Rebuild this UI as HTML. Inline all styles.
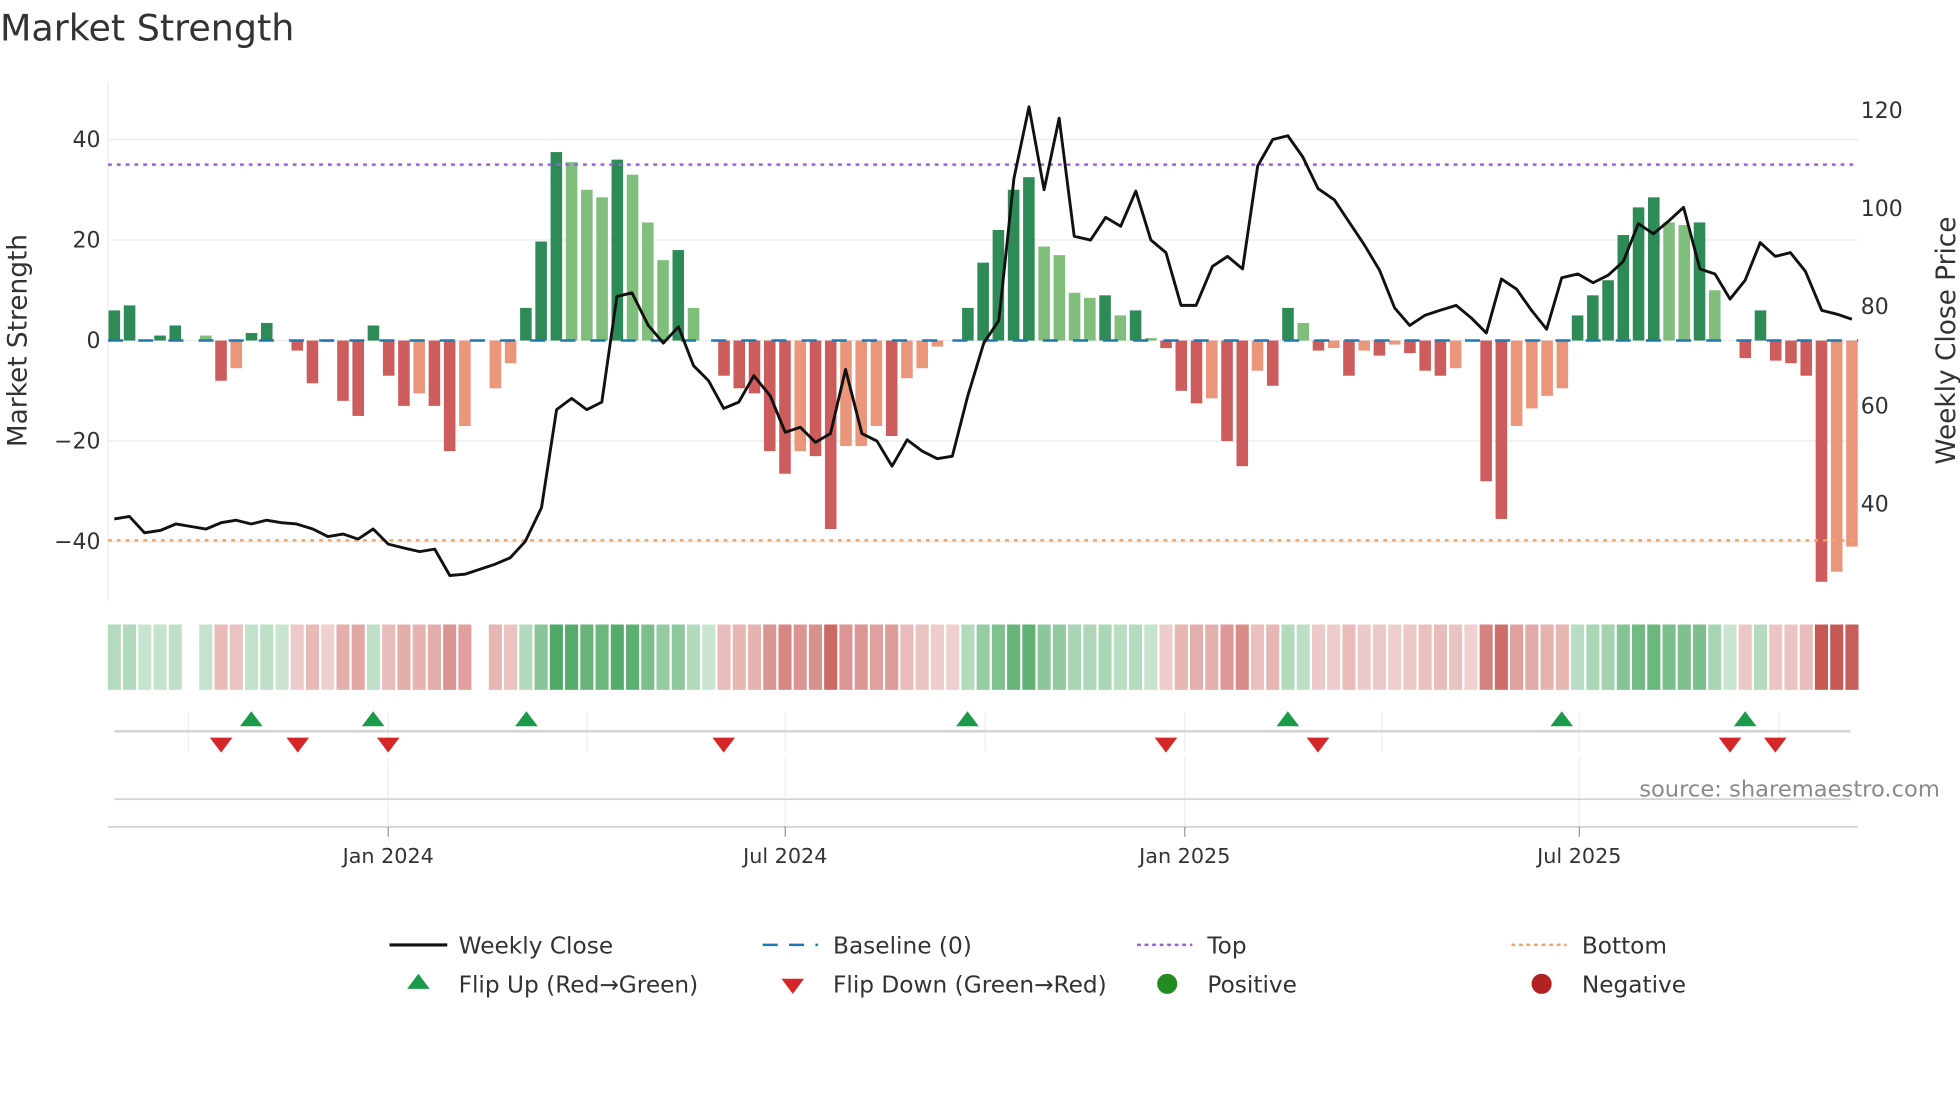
<!DOCTYPE html>
<html><head><meta charset="utf-8">
<style>
html,body{margin:0;padding:0;background:#fff;width:1960px;height:1102px;overflow:hidden}
svg{display:block}
text{font-family:"DejaVu Sans","Liberation Sans",sans-serif;fill:#333}
</style></head>
<body>
<svg id="s" width="1960" height="1102" viewBox="0 0 1560 877" xmlns="http://www.w3.org/2000/svg">
<text x="0" y="32" font-size="29" fill="#333">Market Strength</text>
<g stroke="#eee" stroke-width="1.2">
<line x1="86" y1="111" x2="1479" y2="111"/><line x1="86" y1="191" x2="1479" y2="191"/>
<line x1="86" y1="271" x2="1479" y2="271"/><line x1="86" y1="351" x2="1479" y2="351"/>
<line x1="86" y1="431" x2="1479" y2="431"/>
</g>
<line x1="86" y1="65" x2="86" y2="478" stroke="#eee" stroke-width="1.2"/>
<g font-size="17.5" text-anchor="end">
<text x="80" y="117">40</text><text x="80" y="197">20</text><text x="80" y="277">0</text>
<text x="80" y="357">−20</text><text x="80" y="437">−40</text>
</g>
<g font-size="17.5">
<text x="1481" y="94">120</text><text x="1481" y="172">100</text><text x="1481" y="250">80</text>
<text x="1481" y="329">60</text><text x="1481" y="407">40</text>
</g>
<text transform="translate(21,271) rotate(-90)" font-size="21" text-anchor="middle">Market Strength</text>
<text transform="translate(1556,271) rotate(-90)" font-size="21" text-anchor="middle">Weekly Close Price</text>
<g id="bars"></g>
<line x1="86" y1="271" x2="1479" y2="271" stroke="#1f77b4" stroke-width="2" stroke-dasharray="12,12"/>
<line x1="86" y1="131" x2="1479" y2="131" stroke="#9b5de5" stroke-width="2" stroke-dasharray="3,4"/>
<line x1="86" y1="430" x2="1479" y2="430" stroke="#f4a261" stroke-width="2" stroke-dasharray="3,4"/>
<polyline id="price" fill="none" stroke="#111" stroke-width="2.3" stroke-linejoin="round"/>
<g id="strip"></g>
<g stroke="#eee" stroke-width="1">
<line x1="150" y1="567" x2="150" y2="598"/><line x1="309" y1="567" x2="309" y2="598"/>
<line x1="467" y1="567" x2="467" y2="598"/><line x1="625" y1="567" x2="625" y2="598"/>
<line x1="784" y1="567" x2="784" y2="598"/><line x1="943" y1="567" x2="943" y2="598"/>
<line x1="1100" y1="567" x2="1100" y2="598"/><line x1="1257" y1="567" x2="1257" y2="598"/>
<line x1="1416" y1="567" x2="1416" y2="598"/>
<line x1="309" y1="603" x2="309" y2="658"/><line x1="625" y1="603" x2="625" y2="658"/>
<line x1="943" y1="603" x2="943" y2="658"/><line x1="1257" y1="603" x2="1257" y2="658"/>
</g>
<line x1="91" y1="582" x2="1473" y2="582" stroke="#d4d4d4" stroke-width="2"/>
<g id="marks"></g>
<line x1="91" y1="636" x2="1473" y2="636" stroke="#d4d4d4" stroke-width="1.5"/>
<line x1="86" y1="658" x2="1479" y2="658" stroke="#d4d4d4" stroke-width="1.5"/>
<g stroke="#999" stroke-width="1"><line x1="309" y1="658" x2="309" y2="666"/><line x1="625" y1="658" x2="625" y2="666"/><line x1="943" y1="658" x2="943" y2="666"/><line x1="1257" y1="658" x2="1257" y2="666"/></g>
<g font-size="16.5" text-anchor="middle">
<text x="309" y="687">Jan 2024</text><text x="625" y="687">Jul 2024</text>
<text x="943" y="687">Jan 2025</text><text x="1257" y="687">Jul 2025</text>
</g>
<text x="1544" y="634" font-size="18" text-anchor="end" style="fill:#8a8a8a">source: sharemaestro.com</text>
<g font-size="18.5">
<line x1="310" y1="752" x2="356" y2="752" stroke="#111" stroke-width="2.5"/>
<text x="365" y="759">Weekly Close</text>
<line x1="607" y1="752" x2="651" y2="752" stroke="#1f77b4" stroke-width="2" stroke-dasharray="12,9"/>
<text x="663" y="759">Baseline (0)</text>
<line x1="905" y1="752" x2="949" y2="752" stroke="#9b5de5" stroke-width="2" stroke-dasharray="3,3"/>
<text x="961" y="759">Top</text>
<line x1="1203" y1="752" x2="1247" y2="752" stroke="#f4a261" stroke-width="2" stroke-dasharray="3,3"/>
<text x="1259" y="759">Bottom</text>
<polygon points="333,775 324,787 342,787" fill="#1a9a4a"/>
<text x="365" y="790">Flip Up (Red→Green)</text>
<polygon points="622,779 640,779 631,791" fill="#d62728"/>
<text x="663" y="790">Flip Down (Green→Red)</text>
<circle cx="929" cy="783" r="8" fill="#228b22"/>
<text x="961" y="790">Positive</text>
<circle cx="1227" cy="783" r="8" fill="#b22222"/>
<text x="1259" y="790">Negative</text>
</g>
</svg>
<script>
var V="6D 7D 0D 1D 3D 0D 1L -8R -5.5S 1.5D 3.5D 0D -2R -8.5R -0.3S -12R -15R 3D -7R -13R -10.5S -13R -22R -17S 0D -9.5S -4.5S 6.5D 19.7D 37.5D 35.5L 30L 28.5L 36D 33L 23.5L 16L 18D 6.5L 0D -7R -9.5R -10.5R -22R -26.5R -22S -23R -37.5R -21S -21S -17S -19R -7.5S -5.5S -1.2S 0D 6.5D 15.5D 22D 30D 32.5D 18.7L 17L 9.5L 8.5L 9D 5L 6D 0.5L -1.5R -10R -12.5R -11.5S -20R -25R -6S -9R 6.5D 3.5L -2R -1.5S -7R -2S -3R -0.8S -2.5R -6R -7R -5.5S 0D -28R -35.5R -17S -13.5S -11S -9.5S 5D 9D 12D 21D 26.5D 28.5D 23.5L 23L 23.5D 10L 0D -3.5R 6D -4R -4.5R -7R -48R -46S -41S".split(" ");
var C={D:"#2e8b57",L:"#7fbf7b",R:"#cd5c5c",S:"#e9967a"};
var ns="http://www.w3.org/2000/svg",bars=document.getElementById("bars"),strip=document.getElementById("strip");
var dx=(1474-91)/114,prev=1;
function el(t,a,p){var e=document.createElementNS(ns,t);for(var k in a)e.setAttribute(k,a[k]);p.appendChild(e);return e;}
for(var i=0;i<V.length;i++){
 var v=parseFloat(V[i]),t=V[i].slice(-1),cx=91+dx*i;
 if(v!==0){var y=271-v*4;el("rect",{x:cx-4.6,y:Math.min(y,271),width:9.2,height:Math.abs(v*4),fill:C[t]},bars);}
 if(i==5||i==24)continue;
 var pos=v>0||(v===0&&prev>0); if(v!==0)prev=v;
 var a=Math.min(0.28+Math.abs(v)/45*0.75,1);
 var col=pos?"rgba(60,160,85,"+a.toFixed(2)+")":"rgba(195,80,75,"+(a*0.95).toFixed(2)+")";
 el("rect",{x:cx-5.2,y:497,width:10.4,height:52,fill:col},strip);
}
var P="91,413 103,411 115,424 128,422 140,417 152,419 164,421 176,416 188,414 200,417 212,414 224,416 236,417 249,421 261,427 273,425 285,429 297,421 309,433 321,436 334,439 346,437 358,458 370,457 382,453 394,449 406,444 418,431 431,404 443,326 455,317 467,326 479,320 491,236 503,233 516,259 528,273 540,260 552,291 564,303 576,325 588,320 600,299 613,315 625,344 637,340 649,352 661,345 673,294 686,345 698,351 710,371 722,350 734,359 746,365 758,363 770,316 783,273 795,255 807,142 819,85 831,151 843,94 855,188 868,191 880,173 892,180 904,152 916,191 928,201 940,243 952,243 965,212 977,204 989,214 1001,132 1013,111 1025,108 1037,125 1049,150 1062,159 1074,177 1086,195 1098,215 1110,245 1122,259 1134,251 1146,247 1159,243 1171,253 1183,265 1195,222 1207,230 1219,247 1231,262 1243,221 1256,218 1268,225 1280,219 1292,208 1304,178 1316,186 1328,176 1340,165 1353,214 1365,218 1377,238 1389,223 1401,193 1413,204 1425,201 1437,216 1450,247 1462,250 1474,254";
document.getElementById("price").setAttribute("points",P);
var m=document.getElementById("marks");
[200,297,419,770,1025,1243,1389].forEach(function(x){el("polygon",{points:x+",566 "+(x-9)+",578 "+(x+9)+",578",fill:"#1a9a4a"},m);});
[176,237,309,576,928,1049,1377,1413].forEach(function(x){el("polygon",{points:(x-9)+",587 "+(x+9)+",587 "+x+",599",fill:"#d62728"},m);});
</script>
</body></html>
